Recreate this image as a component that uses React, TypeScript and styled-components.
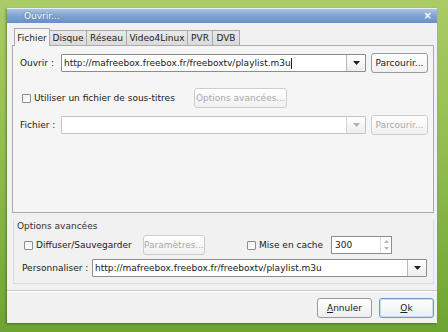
import React from 'react';
import styled, { createGlobalStyle, css } from 'styled-components';

const GlobalStyle = createGlobalStyle`
	html, body {
		margin: 0;
		padding: 0;
	}
	body {
		width: 448px;
		height: 332px;
		overflow: hidden;
		font-family: 'DejaVu Sans', 'Liberation Sans', sans-serif;
		font-size: 9px;
		color: #202020;
	}
`;

const URL = 'http://mafreebox.freebox.fr/freeboxtv/playlist.m3u';

const tabs = [
	{ label: 'Fichier', width: 36 },
	{ label: 'Disque', width: 37 },
	{ label: 'Réseau', width: 40 },
	{ label: 'Video4Linux', width: 61 },
	{ label: 'PVR', width: 25 },
	{ label: 'DVB', width: 27 },
];

const Combo: React.FC<{ value?: string; disabled?: boolean; caret?: boolean }> = ({
	value = '',
	disabled = false,
	caret = false,
}) => (
	<ComboBox disabled={disabled}>
		<ComboText>
			{value}
			{caret && <Caret />}
		</ComboText>
		<ComboArrow disabled={disabled}>
			<svg width="7" height="4" viewBox="0 0 7 4">
				<path d="M0 0h7L3.5 4z" fill={disabled ? '#b0b0b0' : '#202020'} />
			</svg>
		</ComboArrow>
	</ComboBox>
);

const CheckOption: React.FC<{ label: string; width: number }> = ({ label, width }) => (
	<CheckLabel width={width}>
		<CheckBox />
		<span>{label}</span>
	</CheckLabel>
);

const App: React.FC = () => {
	return (
		<>
			<GlobalStyle />
			<Desktop>
				<Window>
					<TitleBar>
						<Title>Ouvrir...</Title>
						<Close>×</Close>
					</TitleBar>
					<TabBar>
						{tabs.map((t, i) => (
							<Tab key={t.label} width={t.width} active={i === 0}>
								{t.label}
							</Tab>
						))}
					</TabBar>
					<TabPane>
						<FormRow>
							<FieldLabel>Ouvrir :</FieldLabel>
							<Combo value={URL} caret />
							<Button width={57}>Parcourir...</Button>
						</FormRow>
						<FormRow top={15}>
							<CheckOption label="Utiliser un fichier de sous-titres" width={169} />
							<Button width={93} disabled>
								Options avancées...
							</Button>
						</FormRow>
						<FormRow top={7}>
							<FieldLabel>Fichier :</FieldLabel>
							<Combo disabled />
							<Button width={57} disabled>
								Parcourir...
							</Button>
						</FormRow>
					</TabPane>
					<Group>
						<GroupTitle>Options avancées</GroupTitle>
						<GroupRow>
							<CheckOption label="Diffuser/Sauvegarder" width={121} />
							<Button width={62} disabled>
								Paramètres...
							</Button>
							<CacheOption>
								<CheckOption label="Mise en cache" width={86} />
							</CacheOption>
							<SpinBox>
								<SpinText>300</SpinText>
								<SpinArrows>
									<svg width="5" height="3" viewBox="0 0 5 3">
										<path d="M0 3h5L2.5 0z" fill="#b8b8b8" />
									</svg>
									<svg width="5" height="3" viewBox="0 0 5 3">
										<path d="M0 0h5L2.5 3z" fill="#b8b8b8" />
									</svg>
								</SpinArrows>
							</SpinBox>
						</GroupRow>
						<GroupRow top={3}>
							<WideLabel>Personnaliser :</WideLabel>
							<Combo value={URL} />
						</GroupRow>
					</Group>
					<Separator />
					<ButtonBar>
						<DialogButton>
							<u>A</u>nnuler
						</DialogButton>
						<DialogButton primary>
							<u>O</u>k
						</DialogButton>
					</ButtonBar>
				</Window>
			</Desktop>
		</>
	);
};

export default App;

const Desktop = styled.div`
	width: 448px;
	height: 332px;
	box-sizing: border-box;
	padding: 8px 11px 9px 7px;
	background: linear-gradient(180deg, #aacb66 0%, #93bd4c 45%, #6ea433 100%);
`;

const Window = styled.div`
	width: 430px;
	height: 315px;
	display: flex;
	flex-direction: column;
	background: #f1f1f1;
	box-shadow: -1px 1px 2px rgba(40, 70, 20, 0.5);
`;

const TitleBar = styled.div`
	height: 14px;
	flex-shrink: 0;
	display: flex;
	align-items: center;
	justify-content: space-between;
	padding: 0 5px 0 17px;
	border-top: 1px solid #e6eef7;
	background: linear-gradient(180deg, #a9c3e2 0%, #7fa3d0 50%, #6890c6 100%);
	color: #ffffff;
`;

const Title = styled.span`
	font-size: 9px;
	text-shadow: 0 0 2px rgba(30, 60, 110, 0.6);
`;

const Close = styled.span`
	font-size: 10px;
	font-weight: bold;
	line-height: 1;
`;

const TabBar = styled.div`
	display: flex;
	align-items: flex-end;
	height: 17px;
	margin: 5px 0 0 7px;
	position: relative;
	z-index: 1;
`;

const Tab = styled.div<{ width: number; active?: boolean }>`
	width: ${(p) => p.width}px;
	height: 15px;
	display: flex;
	align-items: center;
	justify-content: center;
	box-sizing: border-box;
	white-space: nowrap;
	border: 1px solid #a9a9a9;
	border-left-width: 0;
	border-bottom: none;
	background: linear-gradient(180deg, #e9e9e9, #dadada);
	&:first-child {
		border-left-width: 1px;
	}
	${(p) =>
		p.active &&
		css`
			height: 18px;
			margin-bottom: -1px;
			background: #f5f5f5;
		`}
`;

const TabPane = styled.div`
	height: 168px;
	flex-shrink: 0;
	margin: 0 3px 0 5px;
	box-sizing: border-box;
	border: 1px solid #ababab;
	background: #f5f5f5;
	padding: 7px 5px 0 7px;
`;

const FormRow = styled.div<{ top?: number }>`
	display: flex;
	align-items: center;
	gap: 5px;
	height: 20px;
	margin-top: ${(p) => p.top ?? 0}px;
`;

const FieldLabel = styled.span`
	width: 36px;
	flex-shrink: 0;
	white-space: nowrap;
`;

const WideLabel = styled.span`
	width: 70px;
	flex-shrink: 0;
	white-space: nowrap;
`;

const ComboBox = styled.div<{ disabled?: boolean }>`
	flex: 1;
	height: 18px;
	display: flex;
	box-sizing: border-box;
	border: 1px solid ${(p) => (p.disabled ? '#c4c4c4' : '#8d8d8d')};
	border-radius: 1px;
	background: #ffffff;
`;

const ComboText = styled.div`
	flex: 1;
	display: flex;
	align-items: center;
	padding-left: 2px;
	white-space: nowrap;
	overflow: hidden;
`;

const Caret = styled.span`
	width: 1px;
	height: 11px;
	background: #202020;
`;

const ComboArrow = styled.div<{ disabled?: boolean }>`
	width: 18px;
	display: flex;
	align-items: center;
	justify-content: center;
	border-left: 1px solid ${(p) => (p.disabled ? '#d4d4d4' : '#b9b9b9')};
	background: linear-gradient(180deg, #ffffff, #ededed);
`;

const Button = styled.div<{ width: number; disabled?: boolean }>`
	width: ${(p) => p.width}px;
	height: 20px;
	flex-shrink: 0;
	box-sizing: border-box;
	display: flex;
	align-items: center;
	justify-content: center;
	white-space: nowrap;
	border: 1px solid ${(p) => (p.disabled ? '#cdcdcd' : '#9b9b9b')};
	border-radius: 3px;
	background: linear-gradient(180deg, #ffffff 0%, #f0f0f0 100%);
	color: ${(p) => (p.disabled ? '#a9a9a9' : '#202020')};
`;

const CheckLabel = styled.label<{ width: number }>`
	width: ${(p) => p.width}px;
	display: flex;
	align-items: center;
	gap: 3px;
	padding-left: 2px;
	flex-shrink: 0;
	white-space: nowrap;
	box-sizing: border-box;
`;

const CheckBox = styled.span`
	width: 7px;
	height: 7px;
	border: 1px solid #8e8e8e;
	border-radius: 1px;
	background: linear-gradient(180deg, #f2f2f2, #ffffff);
`;

const CacheOption = styled.div`
	margin-left: 40px;
	display: flex;
`;

const Group = styled.div`
	height: 65px;
	flex-shrink: 0;
	margin: 6px 3px 0 6px;
	box-sizing: border-box;
	border: 1px solid #dcdcdc;
	border-top: none;
	padding: 0 6px 0 8px;
`;

const GroupTitle = styled.div`
	height: 13px;
	margin-left: -5px;
	display: flex;
	align-items: center;
	color: #303030;
`;

const GroupRow = styled.div<{ top?: number }>`
	display: flex;
	align-items: center;
	height: 20px;
	margin-top: ${(p) => p.top ?? 3}px;
`;

const SpinBox = styled.div`
	width: 61px;
	height: 18px;
	display: flex;
	box-sizing: border-box;
	border: 1px solid #8d8d8d;
	background: #ffffff;
`;

const SpinText = styled.div`
	flex: 1;
	display: flex;
	align-items: center;
	padding-left: 3px;
`;

const SpinArrows = styled.div`
	width: 10px;
	display: flex;
	flex-direction: column;
	align-items: center;
	justify-content: space-evenly;
	border-left: 1px solid #dedede;
`;

const Separator = styled.div`
	height: 1px;
	margin-top: 6px;
	background: #c9c9c9;
	box-shadow: 0 1px 0 #ffffff;
`;

const ButtonBar = styled.div`
	display: flex;
	justify-content: flex-end;
	gap: 7px;
	margin-top: 7px;
	padding-right: 3px;
`;

const DialogButton = styled.div<{ primary?: boolean }>`
	width: 55px;
	height: 20px;
	box-sizing: border-box;
	display: flex;
	align-items: center;
	justify-content: center;
	border: 1px solid ${(p) => (p.primary ? '#6f98cb' : '#9a9a9a')};
	border-radius: 3px;
	background: linear-gradient(180deg, #ffffff 0%, #eeeeee 100%);
	box-shadow: ${(p) => (p.primary ? 'inset 0 0 0 1px #c9dcf1' : 'none')};
	u {
		text-decoration: underline;
	}
`;
